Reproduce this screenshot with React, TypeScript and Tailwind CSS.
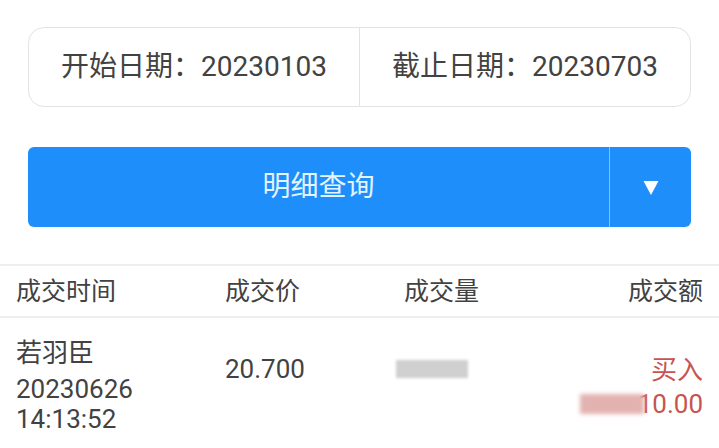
export default function App() {
  const font = "font-['Roboto','Noto_Sans_CJK_SC',sans-serif]";
  return (
    <div className={`w-[719px] h-[448px] overflow-hidden bg-white text-[#424242] ${font}`}>
      {/* date range */}
      <div className="mx-[28px] mt-[27px] flex h-[80px] rounded-[16px] border border-[#e3e3e3]">
        <div className="flex w-[331px] items-center justify-center border-r border-[#e3e3e3] text-[28px] leading-none">
          开始日期：20230103
        </div>
        <div className="flex flex-1 items-center justify-center text-[28px] leading-none">
          截止日期：20230703
        </div>
      </div>

      {/* query button */}
      <div className="mx-[28px] mt-[40px] flex h-[80px] rounded-[6px] bg-[#1e8ffa]">
        <button type="button" className="flex w-[582px] items-center justify-center border-r border-[#7cc6f2] text-[28px] text-[#e3f4ff]">
          明细查询
        </button>
        <button type="button" className="flex flex-1 items-center justify-center pt-[1px]">
          <svg width="16" height="16" viewBox="0 0 16 16">
            <path d="M0.5 1 L15.5 1 L8 15 Z" fill="#fff" />
          </svg>
        </button>
      </div>

      {/* table */}
      <div className="mt-[37px] border-t-2 border-[#eeeeee]">
        <div className="grid h-[52px] grid-cols-[209px_179px_1fr_auto] items-center border-b-2 border-[#eeeeee] px-[16px] text-[25px] leading-none">
          <span>成交时间</span>
          <span>成交价</span>
          <span>成交量</span>
          <span className="text-right">成交额</span>
        </div>
        <div className="grid grid-cols-[209px_179px_1fr_auto] px-[16px] pt-[20px]">
          <div className="flex flex-col text-[26px] leading-[30px]">
            <span className="mb-[6px]">若羽臣</span>
            <span>20230626</span>
            <span>14:13:52</span>
          </div>
          <div className="pt-[16px] text-[26px] leading-[30px]">20.700</div>
          <div className="pt-[22px]">
            <div className="ml-[-8px] h-[18px] w-[72px] bg-[#cfcfcf] blur-[1.5px]" />
          </div>
          <div className="flex flex-col items-end pt-[15px] text-[26px] leading-[34px] text-[#c65550]">
            <span>买入</span>
            <span className="flex items-center">
              <span className="mr-[-6px] h-[20px] w-[64px] bg-[#e2b2b0] blur-[2px]" />
              <span>10.00</span>
            </span>
          </div>
        </div>
      </div>
    </div>
  );
}
